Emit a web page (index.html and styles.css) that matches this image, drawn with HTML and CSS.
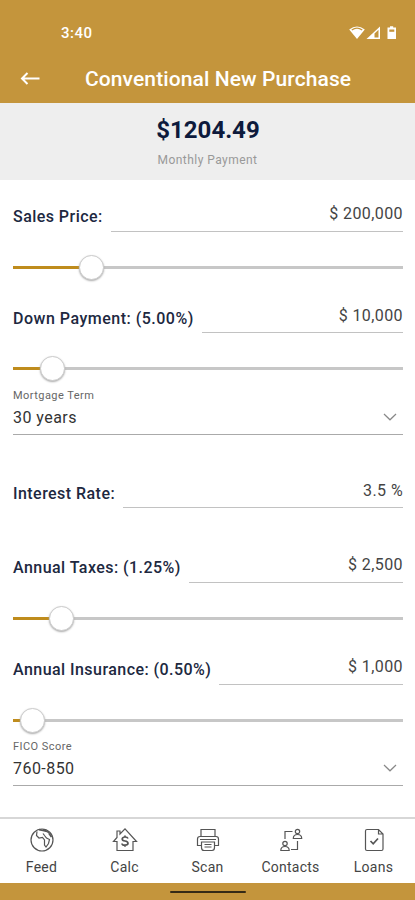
FILE: index.html
```html
<!DOCTYPE html>
<html lang="en">
<head>
<meta charset="utf-8">
<title>Conventional New Purchase</title>
<link rel="stylesheet" href="styles.css">
</head>
<body>
<div class="app">
  <header class="top">
    <div class="status">
      <span class="clock">3:40</span>
      <svg class="status-icons" width="48" height="16" viewBox="0 0 48 16">
        <path d="M.2 4.600Q8-1.800 15.800 4.600L8 14Z" fill="#fff"/>
        <path d="M2.800 5.100Q8 1.300 13.200 5.100" fill="none" stroke="#c4953c" stroke-width="1.300"/>
        <path d="M17.500 14 31 1.500V14Z" fill="#fff"/>
        <path d="M25.500 12.500V8.600L29.500 4.800V12.500Z" fill="#c4953c"/>
        <path d="M41 1.200h3.200v1.400H47V14h-8.500V2.600H41Z" fill="#fff"/>
        <path d="M40.300 4.500h5v2.300h-5Z" fill="#c4953c"/>
      </svg>
    </div>
    <div class="title-bar">
      <svg class="back" width="20" height="14" viewBox="0 0 20 14"><path d="M19.500 6.500H2M7.500 1 2 6.500 7.500 12" fill="none" stroke="#fff" stroke-width="2"/></svg>
      <h1 class="title">Conventional New Purchase</h1>
    </div>
  </header>
  <section class="summary">
    <div class="amount">$1204.49</div>
    <div class="caption">Monthly Payment</div>
  </section>
  <main class="form">
    <div class="field"><span class="label">Sales Price:</span><span class="value">$ 200,000</span></div>
    <div class="slider"><div class="fill" style="width:20%"></div><div class="thumb"></div></div>
    <div class="field down"><span class="label">Down Payment: (5.00%)</span><span class="value">$ 10,000</span></div>
    <div class="slider tall"><div class="fill" style="width:10%"></div><div class="thumb"></div></div>
    <div class="select">
      <span class="hint">Mortgage Term</span>
      <div class="choice"><span>30 years</span><svg width="14" height="8" viewBox="0 0 14 8"><path d="M1 1 7 6.800 13 1"/></svg></div>
    </div>
    <div class="field rate"><span class="label">Interest Rate:</span><span class="value">3.5 %</span></div>
    <div class="field taxes"><span class="label">Annual Taxes: (1.25%)</span><span class="value">$ 2,500</span></div>
    <div class="slider tall"><div class="fill" style="width:12.5%"></div><div class="thumb"></div></div>
    <div class="field insurance"><span class="label">Annual Insurance: (0.50%)</span><span class="value">$ 1,000</span></div>
    <div class="slider"><div class="fill" style="width:5%"></div><div class="thumb"></div></div>
    <div class="select">
      <span class="hint">FICO Score</span>
      <div class="choice"><span>760-850</span><svg width="14" height="8" viewBox="0 0 14 8"><path d="M1 1 7 6.800 13 1"/></svg></div>
    </div>
  </main>
  <nav class="tabs">
    <div class="tab">
      <svg viewBox="0 0 26 26"><circle cx="13" cy="13" r="11"/><path d="M8 4.500 7.500 8.500 10 11 13.500 10.500 15.500 13 15.500 18 17 20 19.500 16.500 20.500 12.500 17.500 11 15.500 8.500 14 6.500M14 2.500 17.500 4 20.500 6.500"/><path class="bold" d="M10 2.600 14 3.500 18 4.500M20 6.500 22.500 10"/></svg>
      <span>Feed</span>
    </div>
    <div class="tab">
      <svg viewBox="0 0 26 26"><path d="M5 23.500V14.500H1.500L5 10.500V4H8V7L13 1.800 24.500 14.500H21V23.500Z"/><path class="bold" d="M16 11.500Q15.500 10 13 10T10.200 12Q10.200 13.700 13 14T16 16.300Q16 18.200 13 18.200T10 16.500M13 8.500V10M13 18V19.700"/></svg>
      <span>Calc</span>
    </div>
    <div class="tab">
      <svg viewBox="0 0 26 26"><path d="M6 9V2.500H20V9M6 18.500H2.500V12Q2.500 9.500 5 9.500H21Q23.500 9.500 23.500 12V18.500H20M6.500 15H19.500V20.500Q19.500 23.500 17 23.500H9Q6.500 23.500 6.500 20.500Z"/><path d="M5 12.500H21M9.500 17.500H16.500M9.500 20H16.500"/></svg>
      <span>Scan</span>
    </div>
    <div class="tab">
      <svg viewBox="0 0 26 26"><circle cx="19.500" cy="4.500" r="2.200"/><path d="M15.300 11.500Q15.300 7.500 19.500 7.500T23.700 11.500Z"/><circle cx="7" cy="16.500" r="2.200"/><path d="M2.800 23.500Q2.800 19.500 7 19.500T11.200 23.500ZM14.500 4.500H7V12M19.500 14V22.500H13"/></svg>
      <span>Contacts</span>
    </div>
    <div class="tab">
      <svg viewBox="0 0 26 26"><path d="M6 2.500H17.500L22 7V22Q22 23.500 20.500 23.500H6Q4.500 23.500 4.500 22V4Q4.500 2.500 6 2.500ZM17.500 2.500V7H22"/><path class="bold" d="M9.500 14 12.200 16.800 17 11.500"/></svg>
      <span>Loans</span>
    </div>
  </nav>
  <footer class="system"><div class="home"></div></footer>
</div>
</body>
</html>
```
FILE: styles.css
```css
* { box-sizing: border-box; }
body { margin: 0; background: #fff; font-family: Roboto, sans-serif; }
.app { width: 415px; height: 900px; display: flex; flex-direction: column; overflow: hidden; }
.top { height: 103px; background: #c4953c; color: #fff; flex: none; }
.status { height: 56px; padding: 24px 18px 0 61px; display: flex; justify-content: space-between; align-items: flex-start; }
.clock { font-size: 15px; line-height: 18px; font-weight: 500; letter-spacing: .5px; }
.status-icons { display: block; margin-top: 1px; }
.title-bar { height: 46px; padding-left: 20px; display: flex; align-items: center; }
.back { margin-right: 45px; flex: none; }
.title { margin: 0; font-size: 21px; line-height: 28px; font-weight: 500; letter-spacing: .1px; white-space: nowrap; }
.summary { height: 77px; flex: none; background: #eee; padding-top: 13px; text-align: center; }
.amount { padding-left: 1px; color: #0d1a3c; font-size: 24px; line-height: 28px; font-weight: 700; }
.caption { margin-top: 8px; color: #999; font-size: 12px; line-height: 16px; letter-spacing: .45px; }
.form { height: 637px; flex: none; padding: 16px 12px 0 13px; }
.field { height: 36px; display: flex; gap: 8px; }
.label { flex: none; padding-top: 10px; color: #20283f; font-size: 16px; line-height: 21px; font-weight: 500; letter-spacing: .45px; white-space: nowrap; }
.value { flex: 1; border-bottom: 1px solid #c2c2c2; color: #444; padding-top: 7px; font-size: 16px; line-height: 21px; letter-spacing: .4px; text-align: right; }
.slider { height: 65px; padding-top: 23px; display: flex; align-items: flex-start; background: linear-gradient(#c7c7c7, #c7c7c7) 0 34px / 100% 3px no-repeat; }
.slider.tall { height: 66px; }
.fill { height: 3px; margin-top: 11px; background: #bf8c1d; flex: none; }
.thumb { width: 25px; height: 25px; margin-left: -12.500px; border-radius: 50%; background: #fff; border: 1px solid #ccc; box-shadow: 0 1px 2px #aaa; flex: none; }
.select { height: 46px; margin-top: -10px; border-bottom: 1px solid #aaa; }
.hint { display: block; font-size: 11px; line-height: 14px; color: #666; letter-spacing: .45px; }
.choice { height: 28px; padding-right: 6px; display: flex; align-items: center; justify-content: space-between; color: #333; font-size: 16px; letter-spacing: .45px; }
.choice svg { fill: none; stroke: #888; stroke-width: 1.200; }
.down .label { padding-top: 11px; letter-spacing: .5px; }
.down .value { padding-top: 8px; }
.rate { margin-top: 37px; }
.rate .label { padding-top: 11px; }
.rate .value { padding-top: 8px; }
.taxes { margin-top: 39px; }
.tabs { height: 66px; flex: none; display: flex; border-top: 2px solid #d7d7d7; }
.tab { flex: 1; display: flex; flex-direction: column; align-items: center; padding-top: 8px; color: #444; font-size: 14px; line-height: 18px; letter-spacing: .25px; }
.tab svg { width: 26px; height: 26px; fill: none; stroke: #555; stroke-width: 1.200; margin-bottom: 5px; }
.tab .bold { stroke-width: 1.700; }
.system { height: 17px; flex: none; background: #c4953c; display: flex; justify-content: center; padding-top: 8px; }
.home { width: 76px; height: 2px; border-radius: 1px; background: #352a16; }
```
